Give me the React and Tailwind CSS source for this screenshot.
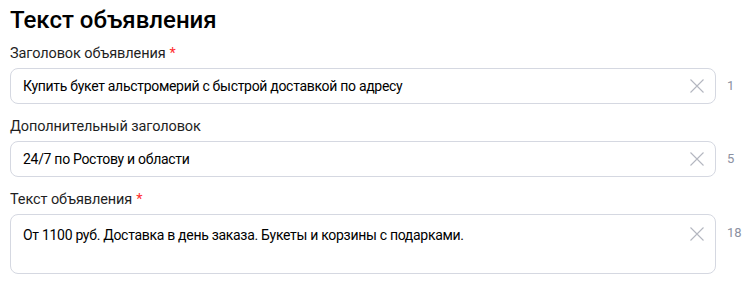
const font = { fontFamily: 'Roboto, "Liberation Sans", sans-serif' };

function ClearIcon() {
  return (
    <svg width="16" height="16" viewBox="0 0 16 16" className="shrink-0">
      <path d="M1.5 1.5 L14.5 14.5 M14.5 1.5 L1.5 14.5" stroke="#b4b7c0" strokeWidth="1.1" fill="none" />
    </svg>
  );
}

function Field({ label, required, value, count, tall }) {
  return (
    <div className="mb-[13px]">
      <div className="text-[14.5px] leading-[20px] tracking-[-0.1px] text-[#1f1f1f] mb-[4px]">
        {label}
        {required && <span className="text-[#ff2d2d] ml-[4px]">*</span>}
      </div>
      <div className="flex items-start">
        <div
          className={`flex-1 flex items-start border border-[#d5d8e1] rounded-[8px] bg-white pl-[12px] pr-[10px] ${
            tall ? "h-[60px] pt-[10px]" : "h-[36px] pt-[7px]"
          }`}
        >
          <div className="flex-1 text-[14px] leading-[20px] tracking-[-0.3px] text-black truncate">{value}</div>
          <div className={tall ? "mt-[1px]" : "mt-[2px]"}>
            <ClearIcon />
          </div>
        </div>
        <div
          className={`w-[31px] pl-[11px] text-[13px] leading-[20px] text-[#8c91a1] ${
            tall ? "pt-[9px]" : "pt-[8px]"
          }`}
        >
          {count}
        </div>
      </div>
    </div>
  );
}

export default function App() {
  return (
    <div className="w-[747px] h-[290px] bg-white pl-[10px] overflow-hidden" style={font}>
      <h1 className="text-[24px] leading-[32px] font-medium text-black mt-[4px] mb-[8px]">
        Текст объявления
      </h1>
      <Field
        label="Заголовок объявления"
        required
        value="Купить букет альстромерий с быстрой доставкой по адресу"
        count="1"
      />
      <Field label="Дополнительный заголовок" value="24/7 по Ростову и области" count="5" />
      <Field
        label="Текст объявления"
        required
        value="От 1100 руб. Доставка в день заказа. Букеты и корзины с подарками."
        count="18"
        tall
      />
    </div>
  );
}
